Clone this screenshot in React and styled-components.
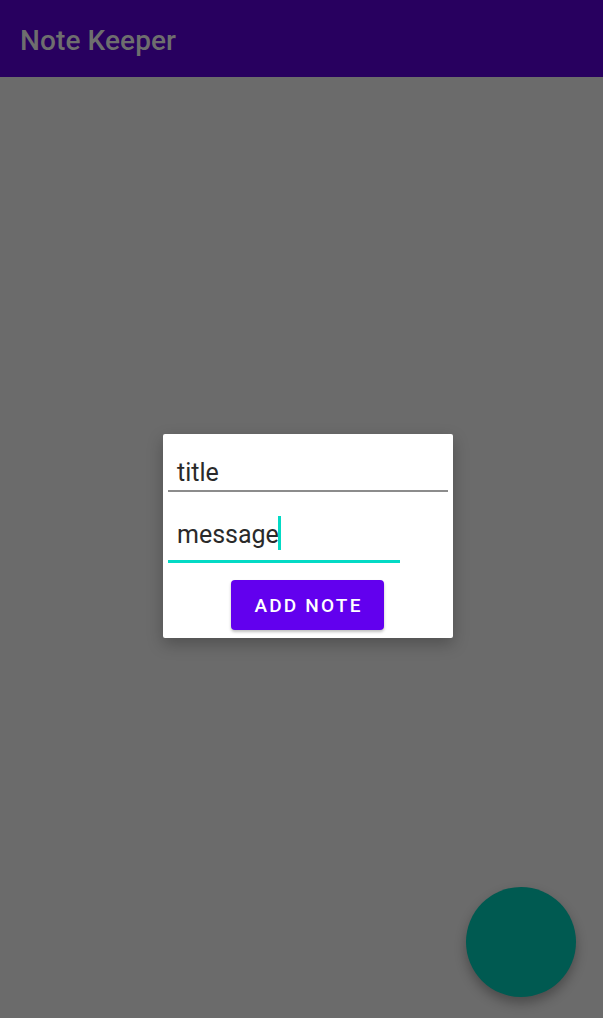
import React from "react";
import styled, { createGlobalStyle } from "styled-components";

const Global = createGlobalStyle`
  html, body { margin: 0; padding: 0; }
  body { font-family: Roboto, "Noto Sans", sans-serif; background: #6b6b6b; }
`;

const Page = styled.div`
  position: relative;
  width: 603px;
  height: 1018px;
  background: #6b6b6b;
  overflow: hidden;
`;

const AppBar = styled.header`
  height: 77px;
  background: #28005f;
  display: flex;
  align-items: center;
  padding: 3px 0 0 20px;
  box-sizing: border-box;
`;

const AppTitle = styled.h1`
  margin: 0;
  font-size: 28px;
  font-weight: 500;
  color: #6e6e6e;
  letter-spacing: 0.1px;
`;

const Main = styled.main`
  display: flex;
  justify-content: center;
  padding-top: 357px;
  padding-left: 13px;
`;

const Dialog = styled.div`
  width: 290px;
  background: #fff;
  border-radius: 2px;
  box-shadow: 0 6px 16px rgba(0, 0, 0, 0.25);
  padding: 12px 5px 8px;
  box-sizing: border-box;
  display: flex;
  flex-direction: column;
`;

const Field = styled.div`
  width: ${(p) => p.$width};
  box-sizing: border-box;
  padding: 0 0 ${(p) => p.$pb}px 9px;
  height: ${(p) => p.$height}px;
  display: flex;
  align-items: flex-end;
  border-bottom: ${(p) => (p.$focused ? "3px solid #03dac5" : "2px solid #8c8c8c")};
  font-size: 25px;
  line-height: 30px;
  color: #2a2a2a;
  margin-bottom: ${(p) => p.$mb}px;
`;

const Cursor = styled.span`
  display: inline-block;
  width: 3px;
  height: 34px;
  background: #03dac5;
  margin-left: -1px;
`;

const ButtonRow = styled.div`
  display: flex;
  justify-content: center;
  padding-right: 1px;
`;

const Button = styled.button`
  width: 153px;
  height: 50px;
  border: none;
  border-radius: 4px;
  background: #6200ee;
  color: #fff;
  font-family: Roboto, sans-serif;
  font-size: 19px;
  font-weight: 500;
  letter-spacing: 2.2px;
  box-shadow: 0 2px 3px rgba(0, 0, 0, 0.25);
  padding: 0 0 0 2px;
`;

const Fab = styled.div`
  position: absolute;
  left: 466px;
  top: 887px;
  width: 110px;
  height: 110px;
  border-radius: 50%;
  background: #005a51;
  box-shadow: 0 6px 12px rgba(0, 0, 0, 0.3);
`;

export default function App() {
  return (
    <>
      <Global />
      <Page>
        <AppBar>
          <AppTitle>Note Keeper</AppTitle>
        </AppBar>
        <Main>
          <Dialog>
            <Field $width="100%" $height={46} $pb={2} $mb={22}>
              title
            </Field>
            <Field $width="232px" $height={49} $pb={10} $mb={17} $focused>
              message
              <Cursor />
            </Field>
            <ButtonRow>
              <Button>ADD NOTE</Button>
            </ButtonRow>
          </Dialog>
        </Main>
        <Fab />
      </Page>
    </>
  );
}
